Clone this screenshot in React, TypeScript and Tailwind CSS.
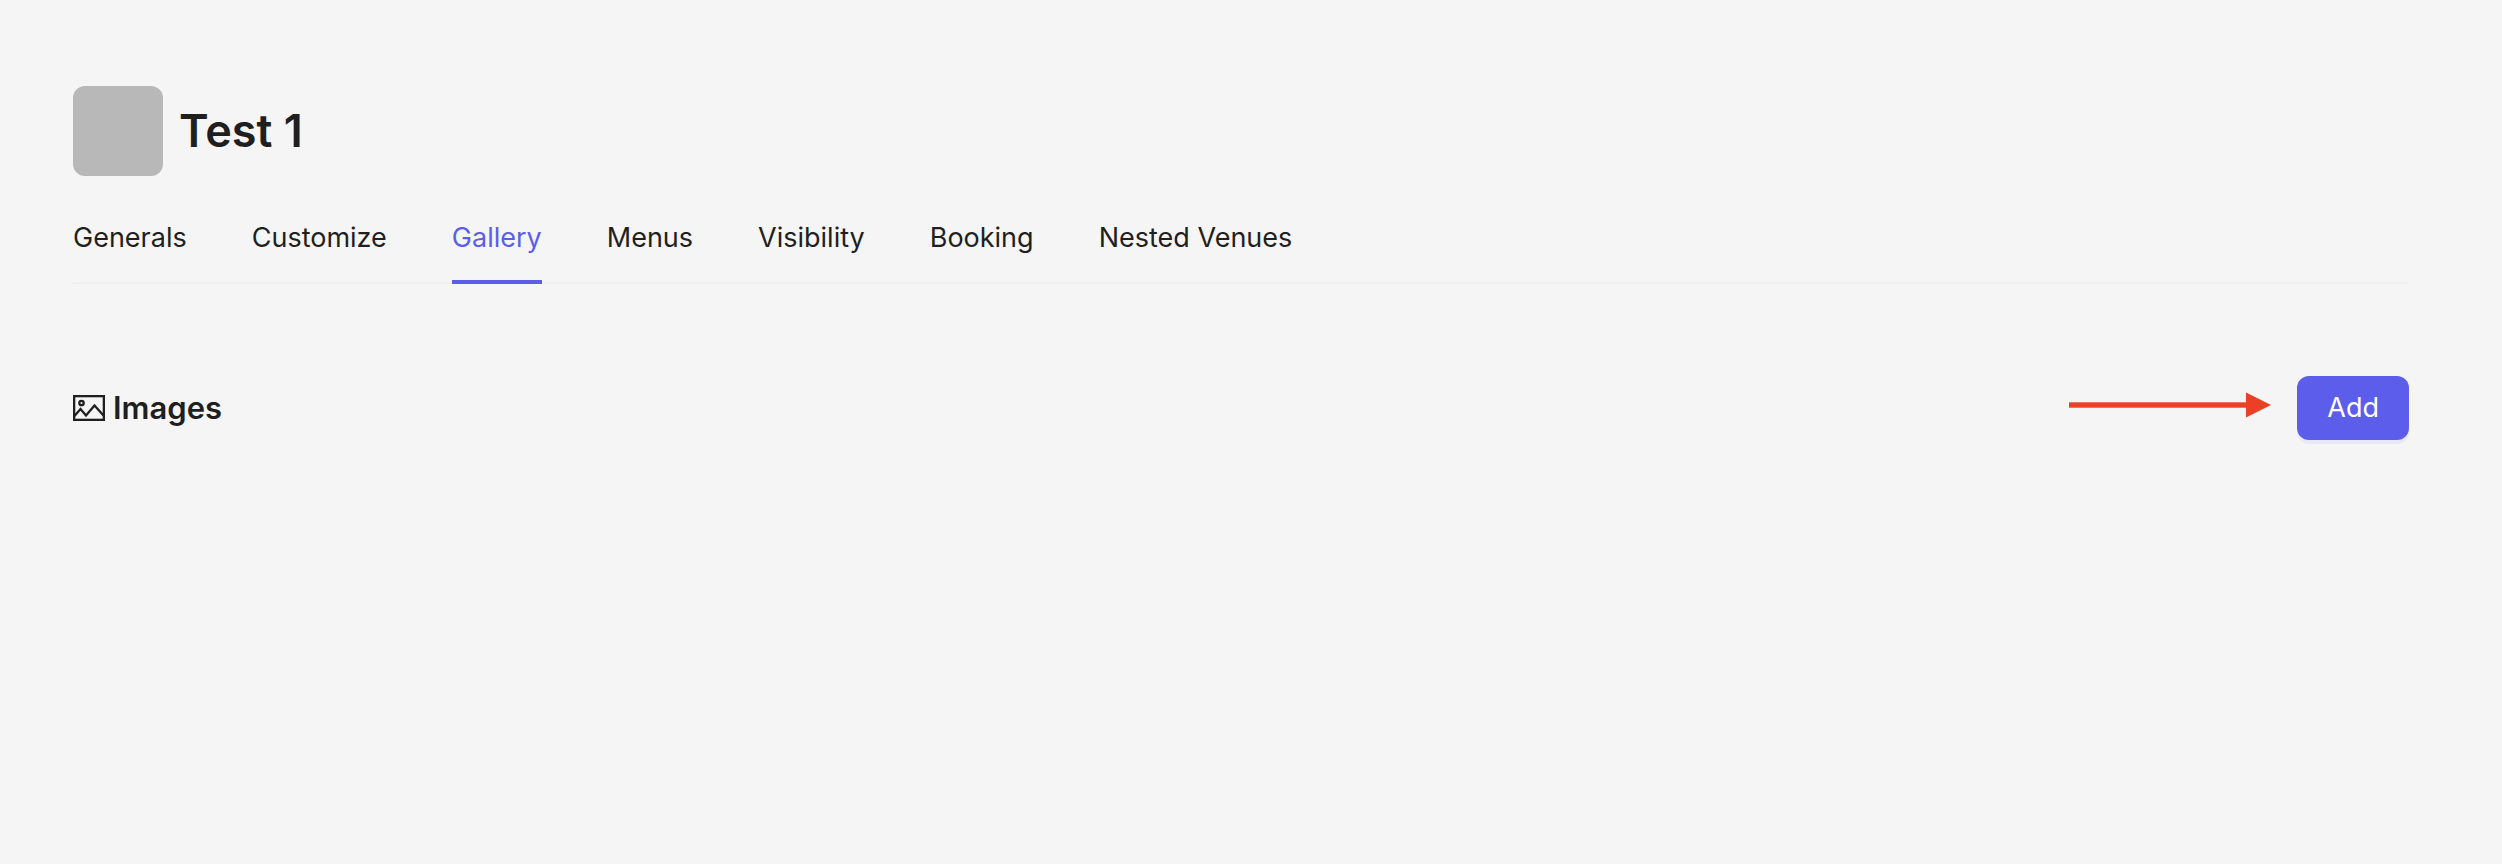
const tabs = [
  'Generals',
  'Customize',
  'Gallery',
  'Menus',
  'Visibility',
  'Booking',
  'Nested Venues',
];

const activeTab = 'Gallery';

function PictureIcon() {
  return (
    <svg
      width="32"
      height="26"
      viewBox="0 0 32 26"
      fill="none"
      stroke="currentColor"
      strokeWidth="2.3"
      aria-hidden="true"
    >
      <rect x="1.15" y="1.15" width="29.7" height="23.7" />
      <circle cx="8.5" cy="8" r="2.2" />
      <path d="M1.5 21L7.5 14L13 20.5L21.5 10.5L30.5 20.5" />
    </svg>
  );
}

function Arrow() {
  return (
    <svg
      width="202"
      height="32"
      viewBox="0 0 202 32"
      fill="#ea4025"
      aria-hidden="true"
    >
      <rect x="0" y="10.3" width="180" height="5.4" />
      <path d="M177 0.5L202 13L177 25.5Z" />
    </svg>
  );
}

export default function App() {
  return (
    <main className="min-h-screen bg-[#f5f5f5] pt-[86px] pr-[93px] pl-[73px] font-[Inter,sans-serif] text-[#1f1f1f]">
      <header className="flex items-center gap-4">
        <div className="size-[90px] rounded-xl bg-[#b8b8b8]"></div>
        <h1 className="text-[45px] font-semibold">Test 1</h1>
      </header>

      {/* Tabs */}
      <nav className="mt-6 flex gap-[65px] border-b-2 border-[#f0f0f0] text-[27px] leading-[44px]">
        {tabs.map((tab) => (
          <a
            key={tab}
            href="#"
            className={
              tab === activeTab
                ? '-mb-0.5 border-b-4 border-[#5d5dec] pt-4 pb-5 text-[#5d5dec]'
                : 'pt-4 pb-5'
            }
          >
            {tab}
          </a>
        ))}
      </nav>

      {/* Images */}
      <section className="mt-[92px] flex items-center justify-between">
        <h2 className="flex items-center gap-2 text-[31px] font-semibold">
          <PictureIcon />
          Images
        </h2>
        <div className="flex items-center gap-[26px]">
          <Arrow />
          <button
            type="button"
            className="h-16 rounded-xl bg-[#5d5dec] px-[30px] text-[27px] text-white shadow-[0_4px_0_#e8e8f7]"
          >
            Add
          </button>
        </div>
      </section>
    </main>
  );
}
